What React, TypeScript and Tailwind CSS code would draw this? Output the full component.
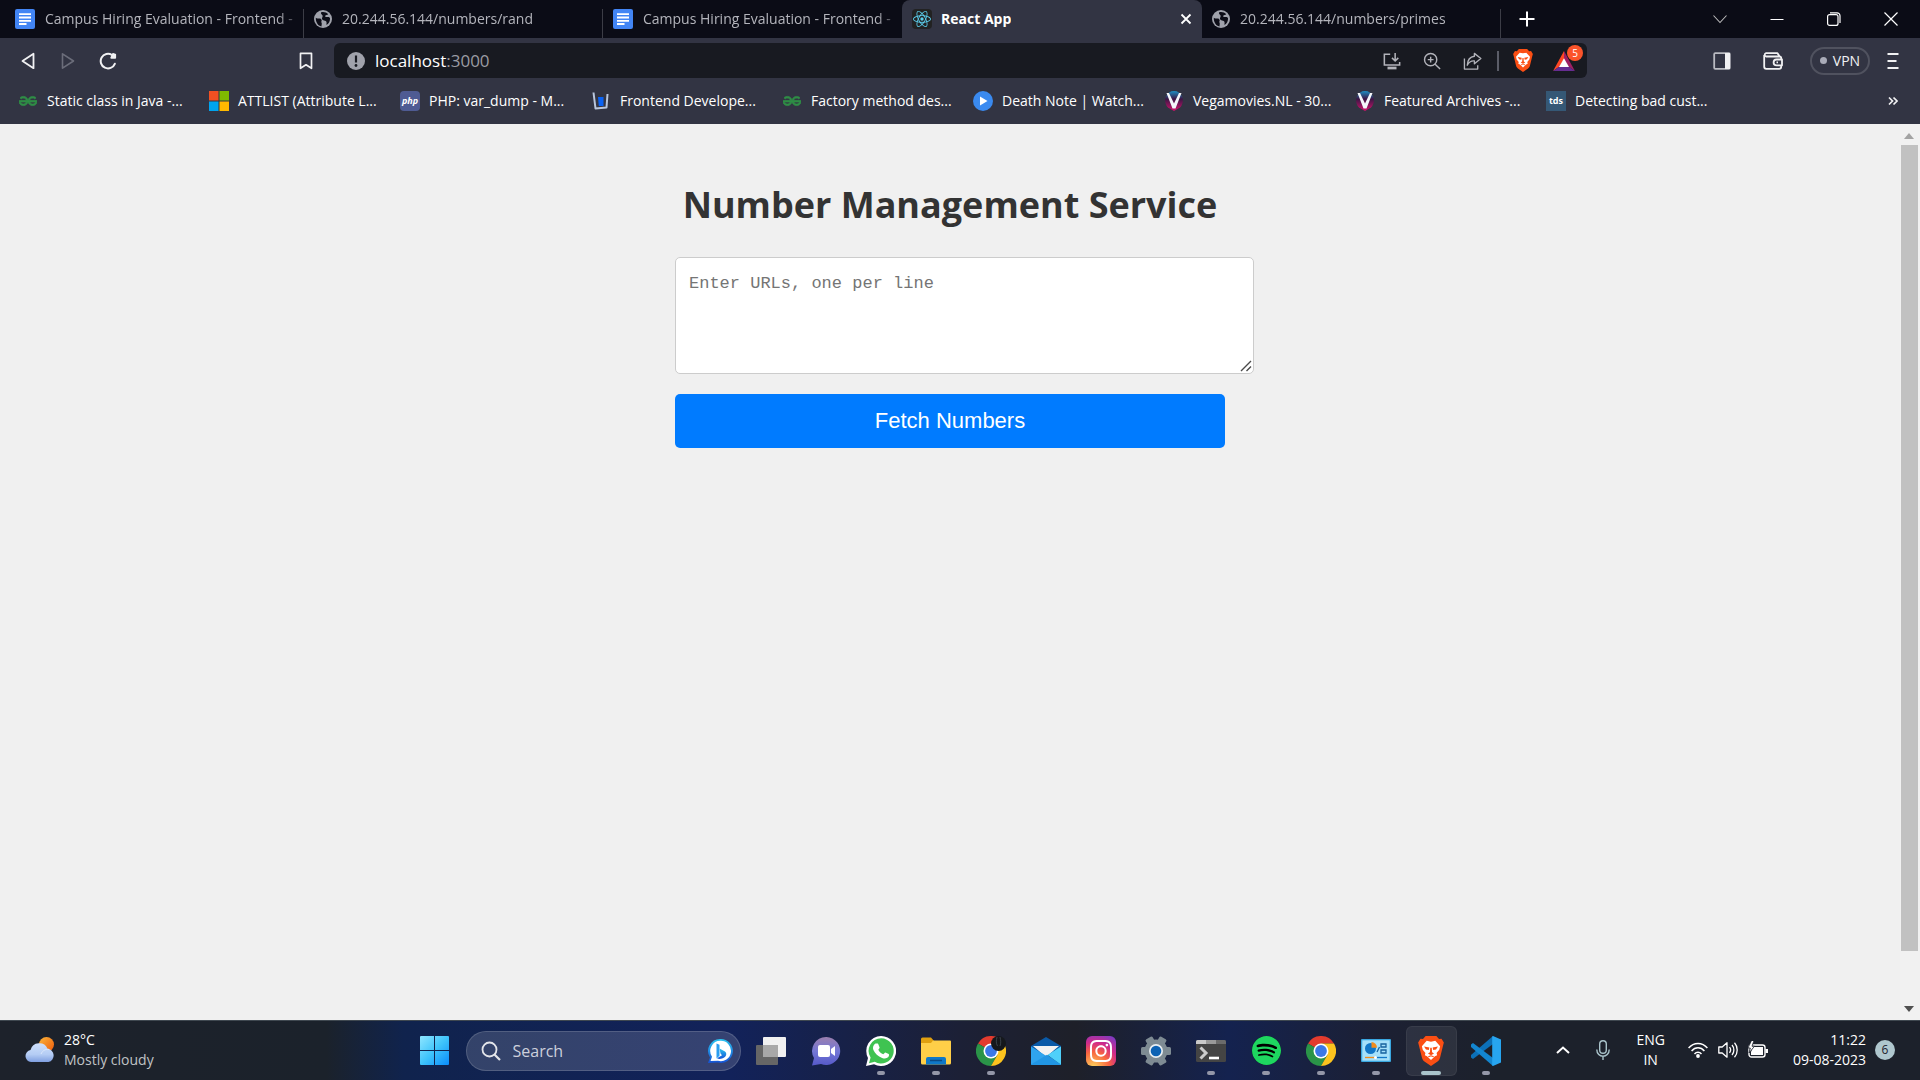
import type { ReactNode } from "react";
import { SiGeeksforgeeks, SiInstagram, SiReact, SiSpotify } from "react-icons/si";

const ui = "font-['Open_Sans','Noto_Sans',sans-serif]";

/* ---------- favicons ---------- */

function DocsIcon() {
  return (
    <svg viewBox="0 0 20 20" className="size-5 shrink-0">
      <rect width="20" height="20" rx="2" fill="#4285f4" />
      <path d="M4 5.200h12M4 8.500h12M4 11.800h12M4 15h7.500" stroke="#fff" strokeWidth="1.800" />
    </svg>
  );
}

function GlobeIcon() {
  return (
    <svg viewBox="0 0 20 20" className="size-[18px] shrink-0">
      <circle cx="10" cy="10" r="10" fill="#a0a2ab" />
      <path d="M2 8.500c2.500 2 4.500.3 6 1.700 1.500 1.500-.5 2.300.3 3.600.8 1.200 0 3 0 4.400C4.500 17.500 1.800 13.500 2 8.500z" fill="#0d0d17" />
      <path d="M8 2.500c3-.8 6 .3 7.800 2.200-1 1.300-2.600.6-3.300 1.800-.6 1 .9 1.500 2.300 1.300 1.500-.2 2.600.3 3 1.500.2 3-1.300 6-3.800 7.500-.5-1.600.6-2.800-.6-4.300-1.200-1.200-3.600-.6-4.400-2.300C8.300 8.500 10 7.700 9.600 6.300 9.200 5.100 7 4.500 8 2.500z" fill="#0d0d17" />
    </svg>
  );
}

function ReactFavicon() {
  return (
    <span className="flex size-5 shrink-0 items-center justify-center rounded-sm bg-[#222]">
      <SiReact className="size-[18px] text-[#5ccfee]" />
    </span>
  );
}

function MicrosoftIcon() {
  return (
    <svg viewBox="0 0 20 20" className="size-5">
      <path d="M0 0h9.500v9.500H0z" fill="#f25022" />
      <path d="M10.500 0H20v9.500h-9.500z" fill="#7fba00" />
      <path d="M0 10.500h9.500V20H0z" fill="#00a4ef" />
      <path d="M10.500 10.500H20V20h-9.500z" fill="#ffb900" />
    </svg>
  );
}

function PhpIcon() {
  return (
    <span className="flex size-5 items-center justify-center rounded-sm bg-[#4f5b93] text-[9px] leading-none font-bold text-white italic">
      php
    </span>
  );
}

function UnstopIcon() {
  return (
    <svg viewBox="0 0 20 20" className="size-5">
      <path d="M2.500 1.500 4.500 17.500 15.500 16.500 16.500 3" fill="none" stroke="#b9c6dc" strokeWidth="2" strokeLinejoin="round" />
      <path d="M7 6h5.500v9H7.800z" fill="#0a62f3" />
    </svg>
  );
}

function PlayIcon() {
  return (
    <svg viewBox="0 0 20 20" className="size-5">
      <circle cx="10" cy="10" r="10" fill="#3a8af0" />
      <path d="M7 5.500 14.500 10 7 14.500z" fill="#fff" />
    </svg>
  );
}

function VegaIcon() {
  return (
    <svg viewBox="0 0 20 20" className="size-5">
      <defs>
        <linearGradient id="vega" x1="0" y1="0" x2="0" y2="1">
          <stop offset="0" stopColor="#1d8fc4" />
          <stop offset=".4" stopColor="#3a1745" />
          <stop offset="1" stopColor="#d3126c" />
        </linearGradient>
      </defs>
      <path d="M10 0c4 0 6 2 8 5 2 4 .5 9-2 11.500L10 20l-6-3.500C1.500 14 0 9 2 5c2-3 4-5 8-5z" fill="url(#vega)" />
      <path d="M2.500 2H5l5 10.500L15 2h2.500l-6 15.500h-3z" fill="#f4f6fa" />
    </svg>
  );
}

function TdsIcon() {
  return (
    <span className="flex size-5 items-center justify-center bg-[#355876] pb-px text-[9px] leading-none font-bold text-white">
      tds
    </span>
  );
}

/* ---------- browser chrome ---------- */

type TabData = { title: string; icon: ReactNode; active?: boolean };

const tabs: TabData[] = [
  { title: "Campus Hiring Evaluation - Frontend -", icon: <DocsIcon /> },
  { title: "20.244.56.144/numbers/rand", icon: <GlobeIcon /> },
  { title: "Campus Hiring Evaluation - Frontend -", icon: <DocsIcon /> },
  { title: "React App", icon: <ReactFavicon />, active: true },
  { title: "20.244.56.144/numbers/primes", icon: <GlobeIcon /> },
];

function Tab({ tab, divider }: { tab: TabData; divider: boolean }) {
  if (tab.active) {
    return (
      <div className="flex w-[300px] min-w-0 items-center rounded-t-lg bg-[#323443] pr-2 pl-2.5">
        <button className="flex h-full min-w-0 flex-1 items-center gap-[9px] text-left font-bold text-white">
          {tab.icon}
          <span className="truncate">{tab.title}</span>
        </button>
        <button aria-label="Close tab" className="p-0.5">
          <svg viewBox="0 0 12 12" className="size-3" stroke="#fff" strokeWidth="1.800">
            <path d="M1.500 1.500l9 9M10.500 1.500l-9 9" />
          </svg>
        </button>
      </div>
    );
  }
  return (
    <div className="flex w-[299px] min-w-0 items-end">
      <button className="flex h-full min-w-0 flex-1 items-center gap-2.5 pl-2.5 text-left text-[#b4b5bc]">
        {tab.icon}
        <span className="flex-1 mask-r-from-90% whitespace-nowrap">{tab.title}</span>
      </button>
      {divider && <span className="h-[29px] w-px bg-[#3c3d46]" />}
    </div>
  );
}

function TabStrip() {
  return (
    <header className="flex h-[38px] bg-[#0b0c16] pl-[5px] text-sm">
      {tabs.map((tab, i) => (
        <Tab key={i} tab={tab} divider={!tabs[i + 1]?.active} />
      ))}
      <button aria-label="New tab" className="ml-4 p-0.5">
        <svg viewBox="0 0 16 16" className="size-4" stroke="#fff" strokeWidth="2">
          <path d="M8 .5v15M.5 8h15" />
        </svg>
      </button>
      <div className="mr-px ml-auto flex text-white">
        <button aria-label="Search tabs" className="flex w-[57px] items-center justify-center">
          <svg viewBox="0 0 14 14" className="size-3.5" fill="none" stroke="#bbb" strokeWidth="1.100">
            <path d="M.5 3.500 7 10.500l6.500-7" />
          </svg>
        </button>
        <button aria-label="Minimize" className="flex w-[57px] items-center justify-center">
          <svg viewBox="0 0 14 14" className="size-3.5" stroke="currentColor">
            <path d="M.5 7.500h13" />
          </svg>
        </button>
        <button aria-label="Restore" className="flex w-[57px] items-center justify-center">
          <svg viewBox="0 0 14 14" className="size-3.5" fill="none" stroke="currentColor" strokeWidth="1.200">
            <rect x=".6" y="2.600" width="10.400" height="10.800" rx="2" />
            <path d="M3 .8h7a3 3 0 0 1 3 3V11" />
          </svg>
        </button>
        <button aria-label="Close" className="flex w-[57px] items-center justify-center">
          <svg viewBox="0 0 14 14" className="size-3.5" stroke="currentColor" strokeWidth="1.200">
            <path d="M.5.5l13 13M13.500.5l-13 13" />
          </svg>
        </button>
      </div>
    </header>
  );
}

function BraveLion({ className }: { className: string }) {
  return (
    <svg viewBox="0 0 24 28" className={className}>
      <path d="M7 0h10l2.500 2.800 2.300-.3L24 6l-.9 3.500L20.500 20c-.4 1.600-1.300 3-2.700 4L12 28l-5.800-4c-1.400-1-2.300-2.400-2.700-4L.9 9.500 0 6l2.200-3.500 2.300.3z" fill="#fb4f14" />
      <path d="M8 4.500l4 .8 4-.8 4.500 5-.8 3.300-2.500 3 .5 2.200-2 .8L12 22.500 8.300 18.800l-2-.8.5-2.200-2.500-3-.8-3.300z" fill="#fff" />
      <path d="M5.500 9.800l5 .9-.6 2.300-2.600-.5zM18.500 9.800l-5 .9.600 2.300 2.600-.5zM11.300 11h1.400l.3 4.200 1.800 1.200L12 18l-2.800-1.600 1.800-1.200z" fill="#fb4f14" />
      <path d="M9.500 19.300 12 18.400l2.500.9" fill="none" stroke="#fb4f14" />
    </svg>
  );
}

function BatIcon() {
  return (
    <svg viewBox="0 0 24 22" className="h-5 w-[22px]">
      <path d="M12 0v9L7 17l-7 5z" fill="#ff4724" />
      <path d="M12 0l12 22-7-5-5-8z" fill="#9e1f63" />
      <path d="M0 22l7-5h10l7 5z" fill="#662d91" />
      <path d="M12 8 17.500 17.500h-11z" fill="#fff" />
    </svg>
  );
}

function Toolbar() {
  return (
    <div className="flex h-[45px] items-center pr-5 pl-[18px]">
      <button aria-label="Back" className="flex w-5 justify-center">
        <svg viewBox="0 0 16 18" className="h-[18px] w-4" fill="none" stroke="#f1f1f3" strokeWidth="1.800" strokeLinejoin="round">
          <path d="M13.500 1.800v14.400L2.500 9z" />
        </svg>
      </button>
      <button aria-label="Forward" disabled className="ml-5 flex w-5 justify-center">
        <svg viewBox="0 0 16 18" className="h-[18px] w-4" fill="none" stroke="#6b6d7a" strokeWidth="1.600" strokeLinejoin="round">
          <path d="M2.500 1.800v14.400L13.500 9z" />
        </svg>
      </button>
      <button aria-label="Reload" className="ml-5 flex w-5 justify-center">
        <svg viewBox="0 0 18 18" className="size-[18px]" fill="none" stroke="#f1f1f3" strokeWidth="2" strokeLinecap="round">
          <path d="M15.800 11.800A7.300 7.300 0 1 1 13 3" />
          <path d="M12.200 5.800h4V2.500l-2.200-.6z" fill="#f1f1f3" strokeWidth="1.800" strokeLinejoin="round" />
        </svg>
      </button>
      <button aria-label="Bookmark this tab" className="ml-auto flex w-5 justify-center">
        <svg viewBox="0 0 14 18" className="h-[18px] w-3.5" fill="none" stroke="#f1f1f3" strokeWidth="1.700" strokeLinejoin="round">
          <path d="M1.500 1.300h11v15L7 12.800 1.500 16.300z" />
        </svg>
      </button>
      <form className="ml-[18px] flex h-[35px] w-[1253px] items-center rounded-md bg-[#181a21] pr-2.5 pl-[13px]" onSubmit={(e) => e.preventDefault()}>
        <button type="button" aria-label="Site information">
          <svg viewBox="0 0 18 18" className="size-[18px]">
            <circle cx="9" cy="9" r="9" fill="#a0a2ab" />
            <path d="M9 3.500v7" stroke="#181a21" strokeWidth="2.200" />
            <circle cx="9" cy="13.500" r="1.400" fill="#181a21" />
          </svg>
        </button>
        <div role="textbox" aria-label="Address" className="ml-2.5 flex-1 text-[17px] text-white">
          localhost<span className="text-[#9b9ca3]">:3000</span>
        </div>
        <div className="flex items-center text-[#b2b3ba]">
          <button type="button" aria-label="Install app" className="mr-5 p-px">
            <svg viewBox="0 0 20 20" className="size-[18px]" fill="none" stroke="currentColor" strokeWidth="1.700">
              <path d="M8 2.500H1.500v12h17V11" />
              <path d="M13.500 1v8.500M10 6.500l3.500 3.500L17 6.500" />
              <path d="M5 17.800h10" strokeWidth="3" />
            </svg>
          </button>
          <button type="button" aria-label="Zoom" className="mr-5 p-px">
            <svg viewBox="0 0 20 20" className="size-[18px]" fill="none" stroke="currentColor" strokeWidth="1.600">
              <circle cx="8.500" cy="8.500" r="6.800" />
              <path d="M13.500 13.500l5.500 5.500M8.500 5.300v6.400M5.300 8.500h6.400" />
            </svg>
          </button>
          <button type="button" aria-label="Share" className="mr-3.5 p-px">
            <svg viewBox="0 0 20 20" className="size-[19px]" fill="none" stroke="currentColor" strokeWidth="1.400" strokeLinejoin="round">
              <path d="M1.500 8v11h14v-4" />
              <path d="M12 2.500 18.800 8 12 13.500v-3C8.500 10.200 6 12 4.500 15 4.800 9.500 7.500 6 12 5.500z" />
            </svg>
          </button>
          <span className="mr-3.5 h-5 w-0.5 bg-[#5b5d68]" />
          <button type="button" aria-label="Brave Shields" className="mr-5">
            <BraveLion className="h-[23px] w-5" />
          </button>
          <button type="button" aria-label="Brave Rewards" className="relative mr-0.5">
            <BatIcon />
            <span className="absolute -top-1.5 -right-2 flex size-4 items-center justify-center rounded-full bg-[#fb542b] text-[10px] leading-none text-white">
              5
            </span>
          </button>
        </div>
      </form>
      <div className="ml-[126px] flex shrink-0 items-center">
        <button aria-label="Sidebar">
          <svg viewBox="0 0 18 18" className="size-[18px]" fill="none">
            <rect x="1.200" y="1.200" width="15.600" height="15.600" rx="1" stroke="#b9bac1" strokeWidth="1.800" />
            <path d="M12 1H17v16h-5z" fill="#f1f1f3" />
          </svg>
        </button>
        <button aria-label="Wallet" className="ml-8">
          <svg viewBox="0 0 20 18" className="h-[18px] w-5" fill="none" stroke="#f1f1f3" strokeWidth="1.800" strokeLinejoin="round">
            <path d="M18.200 7.500V6a1.500 1.500 0 0 0-1.500-1.500H3A1.700 1.700 0 0 1 3 1.200h11.500l2 3M1.200 3v11.800a2 2 0 0 0 2 2h13a2 2 0 0 0 2-2v-1.500" />
            <path d="M19 7.500h-5.500a2.900 2.900 0 0 0 0 5.800H19z" />
            <path d="M13.500 10.400h1.500" />
          </svg>
        </button>
        <button className="ml-[27px] flex h-7 w-[60px] items-center justify-center gap-1.5 rounded-full border-2 border-[#50525f] text-sm text-[#f1f1f3]">
          <span className="size-[7px] rounded-full bg-[#a9abb8]" />
          VPN
        </button>
        <button aria-label="Menu" className="ml-4">
          <svg viewBox="0 0 14 18" className="h-[18px] w-3.5" stroke="#f1f1f3" strokeWidth="1.800">
            <path d="M1.500 2h11M1.500 9h9M1.500 16h11" />
          </svg>
        </button>
      </div>
    </div>
  );
}

const gfg = <SiGeeksforgeeks className="size-[18px] stroke-[#2f8d46] text-[#2f8d46]" strokeWidth="1" />;

const bookmarks: { title: string; icon: ReactNode }[] = [
  { title: "Static class in Java -...", icon: gfg },
  { title: "ATTLIST (Attribute L...", icon: <MicrosoftIcon /> },
  { title: "PHP: var_dump - M...", icon: <PhpIcon /> },
  { title: "Frontend Develope...", icon: <UnstopIcon /> },
  { title: "Factory method des...", icon: gfg },
  { title: "Death Note | Watch...", icon: <PlayIcon /> },
  { title: "Vegamovies.NL - 30...", icon: <VegaIcon /> },
  { title: "Featured Archives -...", icon: <VegaIcon /> },
  { title: "Detecting bad cust...", icon: <TdsIcon /> },
];

function BookmarksBar() {
  return (
    <nav aria-label="Bookmarks" className="flex h-[41px] items-center pb-1.5 pl-[18px] text-sm text-white">
      {bookmarks.map((b) => (
        <a key={b.title} href="#" className="flex w-[191px] items-center gap-[9px] whitespace-nowrap">
          <span className="flex w-5 justify-center">{b.icon}</span>
          {b.title}
        </a>
      ))}
      <button aria-label="More bookmarks" className="mr-[22px] ml-auto">
        <svg viewBox="0 0 10 10" className="size-2.5" fill="none" stroke="#f1f1f3" strokeWidth="1.700">
          <path d="M1 1.500 4.500 5 1 8.500M5.500 1.500 9 5 5.500 8.500" />
        </svg>
      </button>
    </nav>
  );
}

/* ---------- page ---------- */

function Page() {
  return (
    <div className="flex flex-1 bg-[#f0f0f0]">
      <main className="flex-1">
        <div className="mx-auto max-w-[550px] pt-[51px]">
          <h1 className="text-center text-[36px] leading-[60px] font-bold whitespace-nowrap text-[#333]">
            Number Management Service
          </h1>
          <div className="relative mt-[22px] w-[579px]">
            <textarea
              aria-label="URLs"
              placeholder="Enter URLs, one per line"
              className="block h-[117px] w-full resize-none rounded-[5px] border border-[#ccc] bg-white px-[13px] pt-[14px] font-['Liberation_Mono',monospace] text-[17px] leading-6 placeholder:text-[#757575]"
            />
            <svg viewBox="0 0 12 12" className="pointer-events-none absolute right-0.5 bottom-0.5 size-3" stroke="#4a4a4a" strokeWidth="1.400">
              <path d="M1 11 11 1M6.500 11 11 6.500" />
            </svg>
          </div>
          <button className="mt-5 block h-[54px] w-full rounded-[5px] bg-[#007bff] pb-0.5 font-['Liberation_Sans',sans-serif] text-[22px] text-white">
            Fetch Numbers
          </button>
        </div>
      </main>
      <div aria-hidden="true" className="flex w-5 flex-col items-center bg-[#f1f1f1] pt-2 pr-0.5 pb-2">
        <svg viewBox="0 0 10 6" className="mt-px h-1.5 w-2.5">
          <path d="M5 0 10 6H0z" fill="#a3a3a3" />
        </svg>
        <span className="mt-1.5 w-[17px] basis-[806px] bg-[#c1c1c1]" />
        <svg viewBox="0 0 10 6" className="mt-auto h-1.5 w-2.5">
          <path d="M0 0h10L5 6z" fill="#505050" />
        </svg>
      </div>
    </div>
  );
}

/* ---------- taskbar icons ---------- */

function WeatherIcon() {
  return (
    <svg viewBox="0 0 30 26" className="h-[26px] w-[30px]">
      <defs>
        <linearGradient id="sun" x1="0" y1="0" x2="1" y2="1">
          <stop offset="0" stopColor="#fbb63a" />
          <stop offset="1" stopColor="#ee5a0c" />
        </linearGradient>
        <linearGradient id="cloud" x1="0" y1="0" x2="0" y2="1">
          <stop offset="0" stopColor="#cfe0fb" />
          <stop offset=".6" stopColor="#b4ccf4" />
          <stop offset="1" stopColor="#7f9fe0" />
        </linearGradient>
      </defs>
      <circle cx="21.500" cy="7.500" r="7.500" fill="url(#sun)" />
      <path d="M6 25a6 6 0 0 1-.5-11.900 9 9 0 0 1 17-1.300A6.700 6.700 0 0 1 23.500 25z" fill="url(#cloud)" />
      <path d="M16 17c1.500-3.500 5-5.200 8-4.600" stroke="#dce8fc" fill="none" />
    </svg>
  );
}

function WindowsIcon() {
  return (
    <svg viewBox="0 0 29 29" className="size-[29px]">
      <defs>
        <linearGradient id="win" x1="0" y1="0" x2="29" y2="29" gradientUnits="userSpaceOnUse">
          <stop offset="0" stopColor="#8fe6ff" />
          <stop offset=".5" stopColor="#3fc4fb" />
          <stop offset="1" stopColor="#0a8cfb" />
        </linearGradient>
      </defs>
      <path d="M1 0h13v14H0V1a1 1 0 0 1 1-1zM15 0h13a1 1 0 0 1 1 1v13H15zM0 15h14v14H1a1 1 0 0 1-1-1zM15 15h14v13a1 1 0 0 1-1 1H15z" fill="url(#win)" />
    </svg>
  );
}

function BingIcon() {
  return (
    <svg viewBox="0 0 26 26" className="size-[26px]">
      <defs>
        <linearGradient id="bing" x1="0" y1="0" x2="0" y2="1">
          <stop offset="0" stopColor="#2bc4f0" />
          <stop offset="1" stopColor="#1553d6" />
        </linearGradient>
      </defs>
      <path d="M13.500 1a12 12 0 1 1-3 23.500L1 25l2-5.500A12 12 0 0 1 13.500 1z" fill="url(#bing)" />
      <path d="M13.500 2.800a10.200 10.200 0 1 1-2.500 20L3.500 23l1.500-4.300a10.200 10.200 0 0 1 8.500-15.900z" fill="#fff" />
      <path d="M9.500 5.500l3 1.200v11l-3 2.800z" fill="#2a9df0" />
      <path d="M12.500 10.500l5.500 3c2 1.500 1.500 4.500-.5 5.700-2.500 1.700-5.500 2.300-7.500 1l5-3-1.500-1.700z" fill="url(#bing)" />
    </svg>
  );
}

function TaskViewIcon() {
  return (
    <svg viewBox="0 0 30 30" className="size-[30px]">
      <rect y="9" width="22" height="20" rx="1" fill="#666" />
      <rect x="7" y="1" width="23" height="20" rx="1" fill="#f0f0f0" />
      <path d="M7 9h15v12H7z" fill="#a8a8a8" />
    </svg>
  );
}

function ChatIcon() {
  return (
    <svg viewBox="0 0 30 30" className="size-[30px]">
      <defs>
        <linearGradient id="chat" x1="0" y1="0" x2="0" y2="1">
          <stop offset="0" stopColor="#9b7fae" />
          <stop offset=".5" stopColor="#7377d6" />
          <stop offset="1" stopColor="#5558c8" />
        </linearGradient>
      </defs>
      <path d="M15.500 1a14 14 0 1 1-5.500 27L1 29.500l2-7.500A14 14 0 0 1 15.500 1z" fill="url(#chat)" />
      <rect x="7" y="9" width="12" height="12" rx="2" fill="#fff" />
      <path d="M20 13l4-3v10l-4-3z" fill="#fff" />
    </svg>
  );
}

function WhatsAppIcon() {
  return (
    <svg viewBox="0 0 30 30" className="size-[30px]">
      <path d="M15 0a15 15 0 1 1-7 28.200L0 30l2-8A15 15 0 0 1 15 0z" fill="#fff" />
      <path d="M15.200 2.300a12.600 12.600 0 1 1-6.400 23.500l-5.800 1.500 1.600-5.700A12.600 12.600 0 0 1 15.200 2.300z" fill="#3fc351" />
      <path d="M9.500 7.500h2c.5 0 .8.5 1.300 2l.8 2c.2.700-.8 1.500-1.300 2.200 1 2 2.700 3.600 5 4.600.8-.8 1.500-2 2.100-1.900l3.300 1.600c.8.500.2 2.600-.6 3.300-1.500 1.300-3.500 1.500-6 .6-4.200-1.500-7-4.500-8.700-7.900-1-2.400-.2-5 2.100-6.500z" fill="#fff" />
    </svg>
  );
}

function ExplorerIcon() {
  return (
    <svg viewBox="0 0 30 28" className="h-7 w-[30px]">
      <path d="M0 2a1.500 1.500 0 0 1 1.500-1.500H10L13 4v5H0z" fill="#e0a010" />
      <path d="M12 3.500h17a1 1 0 0 1 1 1V26a1.500 1.500 0 0 1-1.500 1.500h-27A1.500 1.500 0 0 1 0 26V6h10z" fill="#ffcf48" />
      <path d="M5 27.500V22a2 2 0 0 1 2-2h16a2 2 0 0 1 2 2v5.500z" fill="#0f78c8" />
      <path d="M9 23.500h12" stroke="#0a4a86" strokeWidth="1.500" />
    </svg>
  );
}

function ChromeIcon({ avatar = false }: { avatar?: boolean }) {
  return (
    <svg viewBox="0 0 30 30" className="size-[30px]">
      <path d="M15 15 2 7.500A15 15 0 0 1 28 7.500H15z" fill="#e33b2e" />
      <path d="M15 15l6.500 3.800L15 30A15 15 0 0 1 2 7.500z" fill="#2a9448" />
      <path d="M15 7.500h13A15 15 0 0 1 15 30l6.500-11.200z" fill="#fcc31e" />
      <circle cx="15" cy="15" r="7.500" fill="#fff" />
      <circle cx="15" cy="15" r="5.900" fill="#3b78e7" />
      {avatar && (
        <>
          <circle cx="22.500" cy="7.500" r="7.500" fill="#15181c" />
          <path d="M21 1c-1 4-1 6 .5 9M24 1c1 4 1 6 0 9" stroke="#39414a" fill="none" />
        </>
      )}
    </svg>
  );
}

function MailIcon() {
  return (
    <svg viewBox="0 0 30 28" className="h-7 w-[30px]">
      <path d="M0 9 15 0l15 9v8H0z" fill="#0a5aa8" />
      <path d="M2 9h26L15 20z" fill="#f2f2f2" />
      <path d="M0 9.500 30 28H1a1 1 0 0 1-1-1z" fill="#2fa4ee" />
      <path d="M30 9.500 16.500 18 30 28z" fill="#4fd0fa" />
      <path d="M0 27.500 16 17.800 30 27.500a1 1 0 0 1-1 .5H1z" fill="#2196e4" />
    </svg>
  );
}

function InstagramIcon() {
  return (
    <span className="flex size-[30px] items-center justify-center rounded-md bg-[radial-gradient(circle_at_25%_105%,#fdc85a_5%,#f8653f_40%,#d12a8a_65%,#6a3fd0_100%)]">
      <SiInstagram className="size-[22px] text-white" />
    </span>
  );
}

function SettingsIcon() {
  return (
    <svg viewBox="0 0 30 30" className="size-[30px]">
      <g fill="#7e8b93">
        <circle cx="15" cy="15" r="11.500" />
        {[0, 60, 120].map((a) => (
          <rect key={a} x="0" y="11" width="30" height="8" rx="1.500" transform={`rotate(${a} 15 15)`} />
        ))}
      </g>
      <circle cx="15" cy="15" r="7" fill="#e8eef2" />
      <circle cx="15" cy="15" r="5.300" fill="#0c62b4" />
    </svg>
  );
}

function TerminalIcon() {
  return (
    <svg viewBox="0 0 30 22" className="h-[22px] w-[30px]">
      <rect width="30" height="22" rx="1.500" fill="#444" />
      <path d="M0 4V1.500A1.500 1.500 0 0 1 1.500 0H10v4z" fill="#c9c9c9" />
      <path d="M10 0h10v4H10z" fill="#999" />
      <path d="M20 0h8.500A1.500 1.500 0 0 1 30 1.500V4H20z" fill="#6b6b6b" />
      <path d="M4.500 7.500l5.500 5.500-5.500 5.500" stroke="#ccc" strokeWidth="3" fill="none" />
      <path d="M13 18h10" stroke="#fff" strokeWidth="2.600" />
    </svg>
  );
}

function SpotifyIcon() {
  return (
    <span className="flex size-[29px] rounded-full bg-black">
      <SiSpotify className="size-full text-[#1ed760]" />
    </span>
  );
}

function ControlPanelIcon() {
  return (
    <svg viewBox="0 0 30 23" className="h-[23px] w-[30px]">
      <rect width="30" height="23" rx="1" fill="#3aa7e0" />
      <rect x="1.300" y="1.300" width="27.400" height="20.400" fill="#a5e0fa" />
      <circle cx="9.500" cy="9.500" r="5.500" fill="#1277c8" />
      <path d="M10.500 8.800V3a5.800 5.800 0 0 1 5.500 5.800z" fill="#f28c1c" />
      <path d="M20 5h5v3h-5zM20 11h5v3h-5zM16 13l2.500-5" fill="none" stroke="#17629f" strokeWidth="1.300" />
      <path d="M4 18.500h10" stroke="#f28c1c" strokeWidth="1.300" />
      <path d="M14 18.500h12" stroke="#1277c8" strokeWidth="1.300" />
      <circle cx="14.500" cy="18.500" r="1.500" fill="#fff" />
    </svg>
  );
}

function VsCodeIcon() {
  return (
    <svg viewBox="0 0 30 30" className="size-[30px]">
      <path d="M22 0 0 19v2.500l2 1.500L22 8z" fill="#0c70b8" />
      <path d="M2 7 0 8.500V11l22 19V22z" fill="#1386d0" />
      <path d="M22 0l8 3.500v23L22 30c-.8 0-.8-.8-.8-1.500v-27C21.200.8 21.200 0 22 0z" fill="#27a5f0" />
    </svg>
  );
}

/* ---------- taskbar ---------- */

type AppData = { name: string; icon: ReactNode; open?: boolean; active?: boolean };

const apps: AppData[] = [
  { name: "Task View", icon: <TaskViewIcon /> },
  { name: "Chat", icon: <ChatIcon /> },
  { name: "WhatsApp", icon: <WhatsAppIcon />, open: true },
  { name: "File Explorer", icon: <ExplorerIcon />, open: true },
  { name: "Chrome, profile", icon: <ChromeIcon avatar />, open: true },
  { name: "Mail", icon: <MailIcon /> },
  { name: "Instagram", icon: <InstagramIcon /> },
  { name: "Settings", icon: <SettingsIcon /> },
  { name: "Terminal", icon: <TerminalIcon />, open: true },
  { name: "Spotify", icon: <SpotifyIcon />, open: true },
  { name: "Chrome", icon: <ChromeIcon />, open: true },
  { name: "Control Panel", icon: <ControlPanelIcon />, open: true },
  { name: "Brave", icon: <BraveLion className="h-[30px] w-[26px]" />, active: true },
  { name: "Visual Studio Code", icon: <VsCodeIcon />, open: true },
];

function TaskbarApp({ app }: { app: AppData }) {
  return (
    <button
      aria-label={app.name}
      className={
        app.active
          ? "relative mx-[2px] flex h-[50px] w-[51px] items-center justify-center rounded-md border border-white/5 bg-white/8"
          : "relative mx-[2px] flex h-[50px] w-[51px] items-center justify-center"
      }
    >
      {app.icon}
      {app.active && <span className="absolute bottom-0 h-1 w-5 rounded-full bg-[#aac4cc]" />}
      {app.open && <span className="absolute bottom-px h-1 w-2 rounded-full bg-[#9497a8]" />}
    </button>
  );
}

function Taskbar() {
  return (
    <footer className="grid h-[60px] grid-cols-[1fr_auto_1fr] items-center border-t border-[#3f4850] bg-[linear-gradient(90deg,#1d222b_0%,#1b222b_17%,#10234d_21%,#12225a_38%,#1c2036_50%,#1e2029_56%,#14224f_64%,#1c2033_72%,#1c212b_78%)] text-sm text-white">
      <button className="flex items-center gap-[9px] pb-0.5 pl-[25px] text-left">
        <WeatherIcon />
        <span className="leading-5">
          <span className="block">28°C</span>
          <span className="block text-[#c0c2c5]">Mostly cloudy</span>
        </span>
      </button>
      <div className="flex items-center pl-[13px]">
        <button aria-label="Start" className="mr-[17px]">
          <WindowsIcon />
        </button>
        <label className="mr-[3px] flex h-10 w-[275px] items-center rounded-full border border-white/15 bg-white/15 pr-[7px] pl-3.5">
          <svg viewBox="0 0 20 20" className="size-5 shrink-0" fill="none" stroke="#e3e5ea" strokeWidth="1.800">
            <circle cx="8.500" cy="8.500" r="7" />
            <path d="M13.500 13.500 19 19" strokeWidth="2.200" />
          </svg>
          <input aria-label="Search" placeholder="Search" className="ml-3 min-w-0 flex-1 text-base outline-none placeholder:text-[#cdd0dc]" />
          <BingIcon />
        </label>
        {apps.map((app) => (
          <TaskbarApp key={app.name} app={app} />
        ))}
      </div>
      <div className="flex items-center justify-end pr-[25px] pb-0.5">
        <button aria-label="Show hidden icons" className="mr-[26px]">
          <svg viewBox="0 0 14 8" className="h-2 w-3.5" fill="none" stroke="#fff" strokeWidth="2">
            <path d="M1 7l6-5.500L13 7" />
          </svg>
        </button>
        <button aria-label="Microphone" className="mr-[26px]">
          <svg viewBox="0 0 14 20" className="h-5 w-3.5" fill="none" stroke="#a9c3ca" strokeWidth="1.400">
            <rect x="3.700" y=".7" width="6.600" height="12.500" rx="3.300" />
            <path d="M.8 9.500c0 9 12.400 9 12.400 0M7 16.500V20" />
          </svg>
        </button>
        <button className="mr-[23px] text-center leading-5">
          <span className="block">ENG</span>
          <span className="block">IN</span>
        </button>
        <button aria-label="Network, volume and battery" className="mr-[25px] flex items-center gap-2.5">
          <svg viewBox="0 0 20 16" className="h-4 w-5" fill="none" stroke="#fff" strokeWidth="1.500">
            <path d="M.6 6c5.200-6 13.600-6 18.800 0M3.600 9c3.600-4.200 9.200-4.200 12.800 0M6.500 11.900c2-2.300 5-2.300 7 0" />
            <circle cx="10" cy="14" r="1.900" fill="#fff" stroke="none" />
          </svg>
          <svg viewBox="0 0 20 18" className="h-[18px] w-5" fill="none" stroke="#fff" strokeWidth="1.300" strokeLinejoin="round">
            <path d="M.8 6h3.400L9 1.800v14.400L4.200 12H.8z" />
            <path d="M11.500 6.200c1.300 1.600 1.300 4 0 5.600M14 4c2.500 2.800 2.500 7.200 0 10M16.500 1.800c3.600 4 3.600 10.400 0 14.400" />
          </svg>
          <svg viewBox="0 0 20 17" className="h-[17px] w-5">
            <rect x="1" y="4" width="16" height="12" rx="2.500" fill="none" stroke="#fff" strokeWidth="1.400" />
            <path d="M5 6h10v8H3v-3zM17.500 8H20v4h-2.500z" fill="#fff" />
            <path d="M3.500-.5 0 7h2.300L1 12l5.500-6.800H4L6-.5z" fill="#fff" stroke="#1c212b" strokeWidth=".8" />
          </svg>
        </button>
        <button className="mr-[9px] text-right leading-5">
          <time className="block">11:22</time>
          <time className="block">09-08-2023</time>
        </button>
        <button aria-label="6 notifications" className="flex size-5 items-center justify-center rounded-full bg-[#afc7ce] text-xs text-[#1c212b]">
          6
        </button>
      </div>
    </footer>
  );
}

export default function App() {
  return (
    <div className={`flex min-h-screen flex-col overflow-hidden ${ui}`}>
      <TabStrip />
      <div className="bg-[#323443]">
        <Toolbar />
        <BookmarksBar />
      </div>
      <Page />
      <Taskbar />
    </div>
  );
}
